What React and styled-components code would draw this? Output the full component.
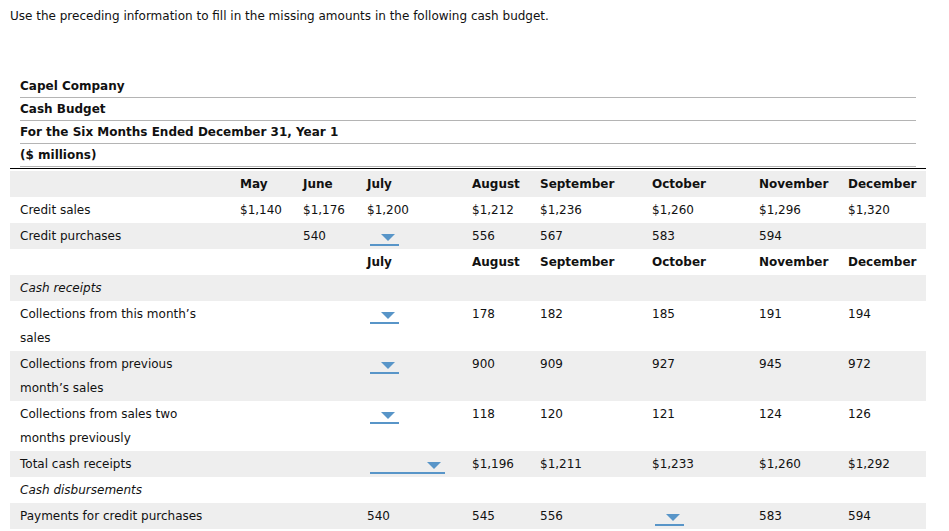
import React from 'react';
import styled, { createGlobalStyle } from 'styled-components';

const GlobalStyle = createGlobalStyle`
    body {
        margin: 0;
        background: #fff;
        font-family: 'DejaVu Sans', Verdana, sans-serif;
        font-size: 12px;
        color: #111;
    }
`;

const Page = styled.div`
    padding: 8px 10px;
    width: 916px;
`;

const Intro = styled.p`
    margin: 0;
    line-height: 16px;
`;

const TitleBlock = styled.div`
    margin: 51px 10px 0 10px;
`;

const TitleRow = styled.div`
    font-weight: bold;
    line-height: 22px;
    border-bottom: 1px solid #b4b4b4;
`;

const Rule = styled.div`
    margin-top: 1px;
    border-top: 1px solid #000;
    margin-bottom: 2px;
`;

const COLUMNS = '220px 63px 64px 105px 68px 112px 107px 89px 88px';

const Row = styled.div`
    display: grid;
    grid-template-columns: ${COLUMNS};
    align-items: start;
    padding: 1px 0;
    background: ${props => props.shaded ? '#eeeeee' : '#ffffff'};
    font-weight: ${props => props.bold ? 'bold' : 'normal'};
`;

const Label = styled.div`
    padding: 0 10px;
    line-height: 24px;
    font-style: ${props => props.italic ? 'italic' : 'normal'};
`;

const Cell = styled.div`
    padding-left: 10px;
    line-height: 24px;
    white-space: nowrap;
`;

const Dropdown = styled.div`
    position: relative;
    width: ${props => props.wide ? '75px' : '29px'};
    height: 22px;
    margin-left: 3px;
    border-bottom: 2px solid #5895c8;
    box-sizing: border-box;
    &::after {
        content: '';
        position: absolute;
        right: 4px;
        top: 10px;
        border-left: 7px solid transparent;
        border-right: 7px solid transparent;
        border-top: 7px solid #5895c8;
    }
`;

const DD = 'dd';
const DDW = 'ddw';

const rows = [
    { shaded: true, bold: true, cells: ['', 'May', 'June', 'July', 'August', 'September', 'October', 'November', 'December'] },
    { cells: ['Credit sales', '$1,140', '$1,176', '$1,200', '$1,212', '$1,236', '$1,260', '$1,296', '$1,320'] },
    { shaded: true, cells: ['Credit purchases', '', '540', DD, '556', '567', '583', '594', ''] },
    { bold: true, cells: ['', '', '', 'July', 'August', 'September', 'October', 'November', 'December'] },
    { shaded: true, italic: true, cells: ['Cash receipts'] },
    { cells: ['Collections from this month’s sales', '', '', DD, '178', '182', '185', '191', '194'] },
    { shaded: true, cells: ['Collections from previous month’s sales', '', '', DD, '900', '909', '927', '945', '972'] },
    { cells: ['Collections from sales two months previously', '', '', DD, '118', '120', '121', '124', '126'] },
    { shaded: true, cells: ['Total cash receipts', '', '', DDW, '$1,196', '$1,211', '$1,233', '$1,260', '$1,292'] },
    { italic: true, cells: ['Cash disbursements'] },
    { shaded: true, cells: ['Payments for credit purchases', '', '', '540', '545', '556', DD, '583', '594'] },
];

const renderValue = value => {
    if (value === DD) return <Dropdown />;
    if (value === DDW) return <Dropdown wide />;
    return value;
};

export default function App() {
    return (
        <Page>
            <GlobalStyle />
            <Intro>Use the preceding information to fill in the missing amounts in the following cash budget.</Intro>
            <TitleBlock>
                <TitleRow>Capel Company</TitleRow>
                <TitleRow>Cash Budget</TitleRow>
                <TitleRow>For the Six Months Ended December 31, Year 1</TitleRow>
                <TitleRow>($ millions)</TitleRow>
            </TitleBlock>
            <Rule />
            {rows.map((row, i) => (
                <Row key={i} shaded={row.shaded} bold={row.bold}>
                    <Label italic={row.italic}>{row.cells[0]}</Label>
                    {row.cells.slice(1).map((value, j) => (
                        <Cell key={j}>{renderValue(value)}</Cell>
                    ))}
                </Row>
            ))}
        </Page>
    );
}
